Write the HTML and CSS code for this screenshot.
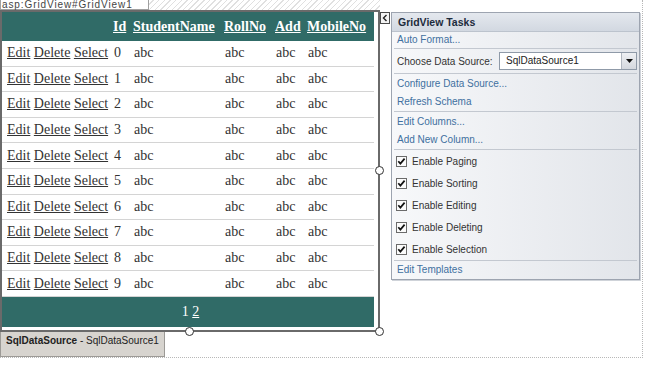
FILE: index.html
```html
<!DOCTYPE html>
<html lang="en">

<head>
    <meta charset="UTF-8">
    <meta name="viewport" content="width=device-width, initial-scale=1.0">
    <title>GridView Designer</title>
    <link rel="stylesheet" href="styles.css">
</head>

<body>

    <div class="design">
        <div class="grid-area">
            <div class="tag-bar">
                <div class="tag">asp:GridView#GridView1</div>
            </div>

            <div class="selection">
                <table class="grid">
                    <colgroup>
                        <col class="c-cmd">
                        <col class="c-id">
                        <col class="c-name">
                        <col class="c-roll">
                        <col class="c-add">
                        <col class="c-mobile">
                    </colgroup>
                    <thead>
                        <tr>
                            <th></th>
                            <th><a href="#">Id</a></th>
                            <th><a href="#">StudentName</a></th>
                            <th><a href="#">RollNo</a></th>
                            <th><a href="#">Add</a></th>
                            <th><a href="#">MobileNo</a></th>
                        </tr>
                    </thead>
                    <tbody>
                        <tr><td><a href="#">Edit</a> <a href="#">Delete</a> <a href="#">Select</a></td><td>0</td><td>abc</td><td>abc</td><td>abc</td><td>abc</td></tr>
                        <tr><td><a href="#">Edit</a> <a href="#">Delete</a> <a href="#">Select</a></td><td>1</td><td>abc</td><td>abc</td><td>abc</td><td>abc</td></tr>
                        <tr><td><a href="#">Edit</a> <a href="#">Delete</a> <a href="#">Select</a></td><td>2</td><td>abc</td><td>abc</td><td>abc</td><td>abc</td></tr>
                        <tr><td><a href="#">Edit</a> <a href="#">Delete</a> <a href="#">Select</a></td><td>3</td><td>abc</td><td>abc</td><td>abc</td><td>abc</td></tr>
                        <tr><td><a href="#">Edit</a> <a href="#">Delete</a> <a href="#">Select</a></td><td>4</td><td>abc</td><td>abc</td><td>abc</td><td>abc</td></tr>
                        <tr><td><a href="#">Edit</a> <a href="#">Delete</a> <a href="#">Select</a></td><td>5</td><td>abc</td><td>abc</td><td>abc</td><td>abc</td></tr>
                        <tr><td><a href="#">Edit</a> <a href="#">Delete</a> <a href="#">Select</a></td><td>6</td><td>abc</td><td>abc</td><td>abc</td><td>abc</td></tr>
                        <tr><td><a href="#">Edit</a> <a href="#">Delete</a> <a href="#">Select</a></td><td>7</td><td>abc</td><td>abc</td><td>abc</td><td>abc</td></tr>
                        <tr><td><a href="#">Edit</a> <a href="#">Delete</a> <a href="#">Select</a></td><td>8</td><td>abc</td><td>abc</td><td>abc</td><td>abc</td></tr>
                        <tr><td><a href="#">Edit</a> <a href="#">Delete</a> <a href="#">Select</a></td><td>9</td><td>abc</td><td>abc</td><td>abc</td><td>abc</td></tr>
                    </tbody>
                    <tfoot>
                        <tr>
                            <td colspan="6" class="pager">1 <a href="#">2</a></td>
                        </tr>
                    </tfoot>
                </table>

                <span class="handle handle-bottom"></span>
                <span class="handle handle-corner"></span>
                <span class="handle handle-right"></span>
            </div>

            <div class="ds-tag"><b>SqlDataSource</b> - SqlDataSource1</div>
        </div>

        <button class="smart-tag" type="button">
            <svg width="6" height="8" viewBox="0 0 6 8"><path d="M4.5 1 L1.5 4 L4.5 7" fill="none" stroke="#222" stroke-width="1.4"/></svg>
        </button>

        <div class="tasks">
            <div class="tasks-head">GridView Tasks</div>

            <div class="section sec-format">
                <a class="task-link" href="#">Auto Format...</a>
            </div>

            <div class="section sec-source">
                <span>Choose Data Source:</span>
                <div class="select">
                    <span class="select-value">SqlDataSource1</span>
                    <span class="select-arrow">
                        <svg width="7" height="4" viewBox="0 0 7 4"><path d="M0 0 H7 L3.5 4 Z" fill="#111"/></svg>
                    </span>
                </div>
            </div>

            <div class="section sec-pair">
                <a class="task-link" href="#">Configure Data Source...</a>
                <a class="task-link" href="#">Refresh Schema</a>
            </div>

            <div class="section sec-pair">
                <a class="task-link" href="#">Edit Columns...</a>
                <a class="task-link" href="#">Add New Column...</a>
            </div>

            <div class="section sec-checks">
                <label class="check"><svg class="box" width="11" height="11" viewBox="0 0 11 11"><rect x="0.5" y="0.5" width="10" height="10" fill="#fbfbfb" stroke="#6b6b6b"/><path d="M2.3 5.2 L4.4 7.6 L8.6 2.6" fill="none" stroke="#111" stroke-width="1.7"/></svg>Enable Paging</label>
                <label class="check"><svg class="box" width="11" height="11" viewBox="0 0 11 11"><rect x="0.5" y="0.5" width="10" height="10" fill="#fbfbfb" stroke="#6b6b6b"/><path d="M2.3 5.2 L4.4 7.6 L8.6 2.6" fill="none" stroke="#111" stroke-width="1.7"/></svg>Enable Sorting</label>
                <label class="check"><svg class="box" width="11" height="11" viewBox="0 0 11 11"><rect x="0.5" y="0.5" width="10" height="10" fill="#fbfbfb" stroke="#6b6b6b"/><path d="M2.3 5.2 L4.4 7.6 L8.6 2.6" fill="none" stroke="#111" stroke-width="1.7"/></svg>Enable Editing</label>
                <label class="check"><svg class="box" width="11" height="11" viewBox="0 0 11 11"><rect x="0.5" y="0.5" width="10" height="10" fill="#fbfbfb" stroke="#6b6b6b"/><path d="M2.3 5.2 L4.4 7.6 L8.6 2.6" fill="none" stroke="#111" stroke-width="1.7"/></svg>Enable Deleting</label>
                <label class="check"><svg class="box" width="11" height="11" viewBox="0 0 11 11"><rect x="0.5" y="0.5" width="10" height="10" fill="#fbfbfb" stroke="#6b6b6b"/><path d="M2.3 5.2 L4.4 7.6 L8.6 2.6" fill="none" stroke="#111" stroke-width="1.7"/></svg>Enable Selection</label>
            </div>

            <div class="section sec-templates">
                <a class="task-link" href="#">Edit Templates</a>
            </div>
        </div>
    </div>

</body>

</html>
```

FILE: styles.css
```css
body {
    margin: 0;
    font-family: "Liberation Sans", Arial, sans-serif;
    background: #fff;
}

.design {
    display: flex;
    align-items: flex-start;
    width: 642px;
    height: 357px;
    border-right: 1px dotted #b8b8b8;
    border-bottom: 1px dotted #b8b8b8;
}

.grid-area {
    width: 380px;
    flex-shrink: 0;
}

/* control name tab + hatched strip */
.tag-bar {
    height: 10px;
    background: repeating-linear-gradient(135deg, #e0e0e0 0 1px, #fff 1px 4px);
}

.tag {
    width: 149px;
    height: 10px;
    box-sizing: border-box;
    padding-left: 1px;
    background: #fff;
    border: 1px solid #a0a0a0;
    border-top: none;
    font-size: 10px;
    line-height: 9px;
    letter-spacing: 0.9px;
    color: #444;
    white-space: nowrap;
}

/* selected control frame */
.selection {
    position: relative;
    width: 372px;
    padding: 0 4px 3px 0;
    border: 2px solid #6a6a6a;
}

.handle {
    position: absolute;
    width: 7px;
    height: 7px;
    border: 1px solid #333;
    border-radius: 50%;
    background: #fff;
}

.handle-bottom {
    left: 50%;
    bottom: -6px;
    margin-left: -5px;
}

.handle-corner {
    right: -6px;
    bottom: -6px;
}

.handle-right {
    right: -6px;
    top: 50%;
    margin-top: -5px;
}

/* the grid */
.grid {
    width: 372px;
    table-layout: fixed;
    border-collapse: collapse;
    font-family: "Liberation Serif", "Times New Roman", serif;
    font-size: 14px;
    color: #333;
}

.c-cmd { width: 108px; }
.c-id { width: 20px; }
.c-name { width: 91px; }
.c-roll { width: 51px; }
.c-add { width: 32px; }
.c-mobile { width: 70px; }

.grid a {
    color: #333;
}

.grid th {
    height: 29px;
    padding: 0 3px;
    background: #306b67;
    text-align: left;
    font-weight: bold;
}

.grid th a {
    color: #fff;
}

.grid td {
    height: 24.6px;
    padding: 0 4px;
    border-bottom: 1px solid #d4d4d4;
    white-space: nowrap;
}

.grid td:first-child {
    padding-left: 5px;
}

.grid .pager {
    height: 30px;
    padding: 0;
    border-bottom: none;
    background: #306b67;
    color: #fff;
    text-align: center;
}

.grid .pager a {
    color: #fff;
}

.ds-tag {
    width: 165px;
    height: 25px;
    box-sizing: border-box;
    padding: 3px 5px 0;
    background: #d7d4cf;
    border: 1px solid #9c9a96;
    border-top: none;
    font-size: 10px;
    line-height: 12px;
    color: #222;
    white-space: nowrap;
}

/* smart tag + task panel */
.smart-tag {
    display: flex;
    align-items: center;
    justify-content: center;
    width: 10px;
    height: 12px;
    margin-top: 12px;
    padding: 0;
    border: 1px solid #4a4a4a;
    background: #f4f4f4;
    box-sizing: border-box;
}

.tasks {
    width: 247px;
    height: 266px;
    margin-top: 12px;
    margin-left: 1px;
    border: 1px solid #9da4b0;
    background: linear-gradient(to right, #f7f8fa, #e2e5ea);
    box-shadow: 1px 1px 0 #cfd3d9;
    font-size: 10px;
    color: #333;
}

.tasks-head {
    height: 18px;
    line-height: 18px;
    padding-left: 6px;
    border-bottom: 1px solid #bcc3cd;
    background: linear-gradient(#e4e8ee, #d2d8e1);
    font-size: 10.5px;
    font-weight: bold;
    color: #1d2b3c;
}

.section {
    margin: 0 2px;
    padding-left: 3px;
}

.section + .section {
    border-top: 1px solid #c3c8d0;
}

.task-link {
    display: block;
    height: 18px;
    line-height: 18px;
    color: #41709f;
    text-decoration: none;
}

.sec-format .task-link {
    height: 16px;
    line-height: 16px;
}

.sec-source {
    display: flex;
    align-items: center;
    justify-content: space-between;
    height: 24px;
}

.select {
    display: flex;
    width: 138px;
    height: 18px;
    box-sizing: border-box;
    border: 1px solid #8f9aa8;
    background: #fff;
}

.select-value {
    flex: 1;
    padding-left: 6px;
    line-height: 16px;
    color: #222;
}

.select-arrow {
    display: flex;
    align-items: center;
    justify-content: center;
    width: 14px;
    border-left: 1px solid #b0b6bf;
    background: linear-gradient(#eef0f3, #d4d8de);
}

.sec-pair {
    padding-top: 1px;
}

.check {
    display: flex;
    align-items: center;
    gap: 5px;
    height: 22px;
    color: #333;
}

.check .box {
    margin-left: -1px;
}
```
